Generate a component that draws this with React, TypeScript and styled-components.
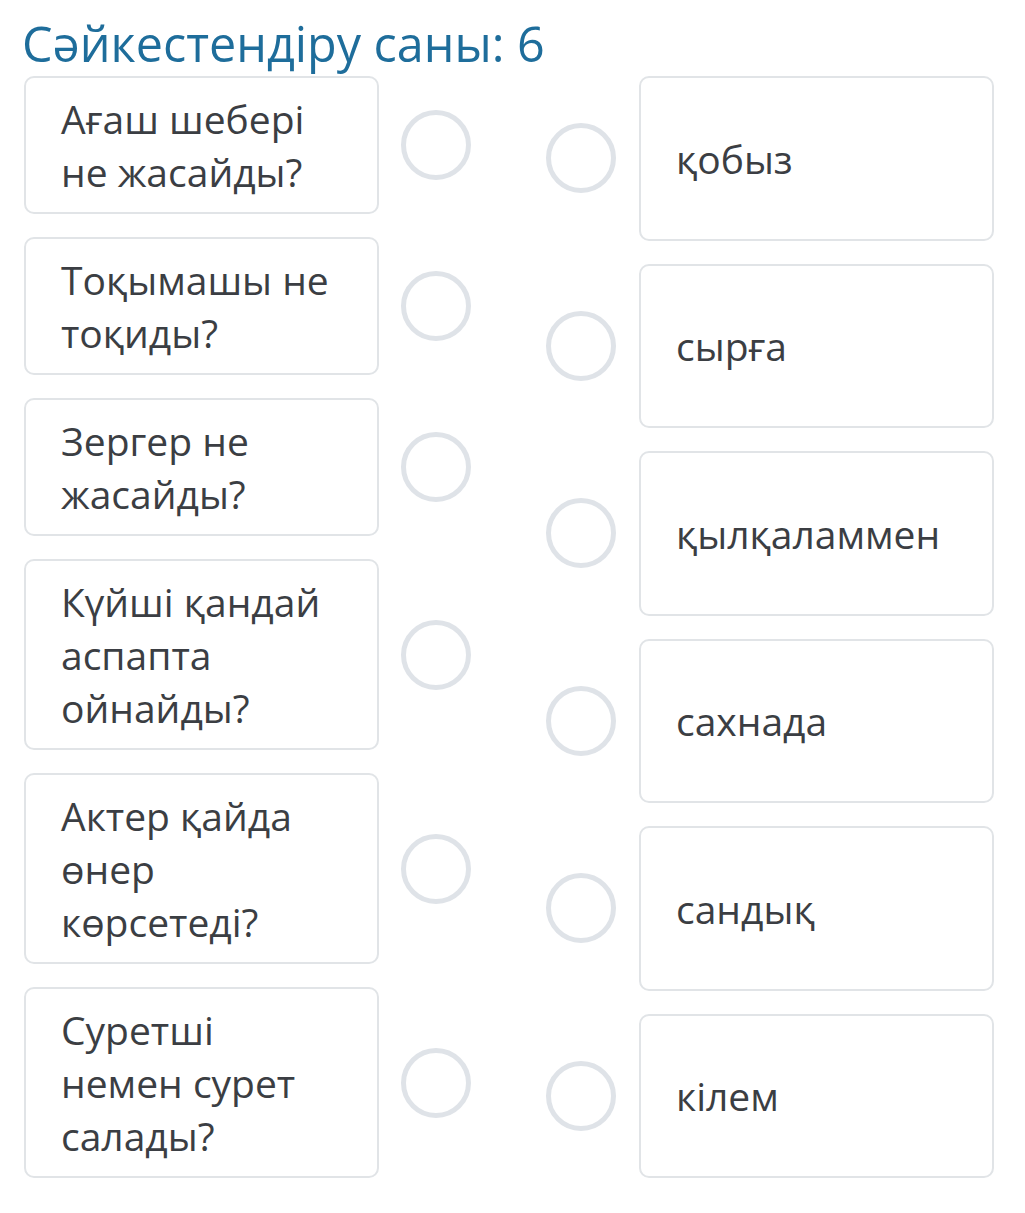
import React from "react";
import styled, { createGlobalStyle } from "styled-components";

const Global = createGlobalStyle`
  html, body { margin: 0; padding: 0; background: #ffffff; }
  body { font-family: "Open Sans", "Noto Sans", sans-serif; }
`;

const Page = styled.div`
  padding: 14px 31px 30px 24px;
  width: 1025px;
  box-sizing: border-box;
`;

const Title = styled.h1`
  margin: 0 0 4px -2px;
  font-weight: 400;
  font-size: 48.5px;
  line-height: 58px;
  color: #1e6d9b;
  letter-spacing: 0;
`;

const Board = styled.div`
  display: flex;
  align-items: stretch;
  gap: 75px;
`;

const Column = styled.div`
  display: flex;
  flex-direction: column;
  gap: 23px;
`;

const LeftRow = styled.div`
  display: flex;
  align-items: center;
  gap: 22px;
`;

const RightRow = styled.div`
  flex: 1;
  display: flex;
  align-items: center;
  gap: 23px;
`;

const Card = styled.div<{ $stretch?: boolean }>`
  width: 355px;
  box-sizing: border-box;
  border: 2px solid #e1e4e7;
  border-radius: 10px;
  padding: 14px 20px 14px 35px;
  font-size: 39px;
  line-height: 53px;
  color: #3b3e43;
  background: #fff;
  ${(p) =>
    p.$stretch &&
    `
    align-self: stretch;
    display: flex;
    align-items: center;
  `}
`;

const Dot = styled.div`
  width: 70px;
  height: 70px;
  box-sizing: border-box;
  border: 5px solid #dfe3e8;
  border-radius: 50%;
  flex: none;
`;

const questions = [
  ["Ағаш шебері", "не жасайды?"],
  ["Тоқымашы не", "тоқиды?"],
  ["Зергер не", "жасайды?"],
  ["Күйші қандай", "аспапта", "ойнайды?"],
  ["Актер қайда", "өнер", "көрсетеді?"],
  ["Суретші", "немен сурет", "салады?"],
];

const answers = ["қобыз", "сырға", "қылқаламмен", "сахнада", "сандық", "кілем"];

export default function App() {
  return (
    <Page>
      <Global />
      <Title>Сәйкестендіру саны: 6</Title>
      <Board>
        <Column>
          {questions.map((lines, i) => (
            <LeftRow key={i}>
              <Card>
                {lines.map((l, j) => (
                  <div key={j}>{l}</div>
                ))}
              </Card>
              <Dot />
            </LeftRow>
          ))}
        </Column>
        <Column>
          {answers.map((a, i) => (
            <RightRow key={i}>
              <Dot />
              <Card $stretch>{a}</Card>
            </RightRow>
          ))}
        </Column>
      </Board>
    </Page>
  );
}
